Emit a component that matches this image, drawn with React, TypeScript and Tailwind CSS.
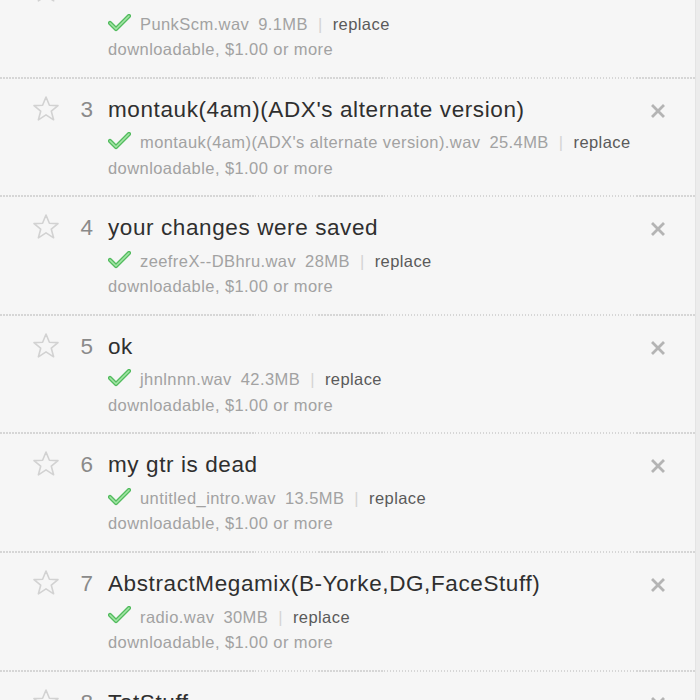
import React from "react";

type Row = { n: number; title: string; file: string; size: string };

const rows: Row[] = [
  { n: 2, title: "PunkScm", file: "PunkScm.wav", size: "9.1MB" },
  { n: 3, title: "montauk(4am)(ADX's alternate version)", file: "montauk(4am)(ADX's alternate version).wav", size: "25.4MB" },
  { n: 4, title: "your changes were saved", file: "zeefreX--DBhru.wav", size: "28MB" },
  { n: 5, title: "ok", file: "jhnlnnn.wav", size: "42.3MB" },
  { n: 6, title: "my gtr is dead", file: "untitled_intro.wav", size: "13.5MB" },
  { n: 7, title: "AbstractMegamix(B-Yorke,DG,FaceStuff)", file: "radio.wav", size: "30MB" },
  { n: 8, title: "TotStuff", file: "tot.wav", size: "12MB" },
];

function Star() {
  return (
    <svg width="28" height="28" viewBox="0 0 28 28">
      <polygon
        points="14,2 17.4,10.2 26,10.6 19.3,16.2 21.6,24.8 14,19.9 6.4,24.8 8.7,16.2 2,10.6 10.6,10.2"
        fill="none"
        stroke="#d2d2d2"
        strokeWidth="1.6"
        strokeLinejoin="round"
      />
    </svg>
  );
}

function Check() {
  return (
    <svg width="23" height="18" viewBox="0 0 23 18">
      <path d="M2 9 L8 15 L21 2" fill="none" stroke="#52bb5e" strokeWidth="4.2" strokeLinecap="round" strokeLinejoin="round" />
      <path d="M2 9 L8 15 L21 2" fill="none" stroke="#a4e6a6" strokeWidth="1.6" strokeLinecap="round" strokeLinejoin="round" />
    </svg>
  );
}

function XIcon() {
  return (
    <svg width="14" height="14" viewBox="0 0 14 14">
      <path d="M2 2 L12 12 M12 2 L2 12" stroke="#b4b4b4" strokeWidth="2.8" strokeLinecap="square" />
    </svg>
  );
}

function TrackRow({ r }: { r: Row }) {
  return (
    <div className="h-[118.6px] flex flex-col">
      <div className="flex-1 flex">
        <div className="w-[108px] shrink-0 flex items-start pt-[17px]">
          <div className="ml-[32px] mt-[-1px]">
            <Star />
          </div>
          <div className="w-[33px] text-right text-[22.5px] leading-[28px] text-[#8a8a8a]">{r.n}</div>
        </div>
        <div className="flex-1 pt-[17px]">
          <div className="text-[22.5px] leading-[28px] tracking-[0.6px] text-[#2f2f2f] whitespace-nowrap">{r.title}</div>
          <div className="flex items-center mt-[7px] h-[24px] text-[16.5px] tracking-[0.42px] whitespace-nowrap">
            <span className="mt-[-3px] mr-[9px]">
              <Check />
            </span>
            <span className="text-[#a2a2a2]">{r.file}</span>
            <span className="text-[#a2a2a2] ml-[9px]">{r.size}</span>
            <span className="text-[#d4d4d4] mx-[10px]">|</span>
            <span className="text-[#5a5a5a]">replace</span>
          </div>
          <div className="mt-[1px] h-[24px] leading-[24px] text-[16.5px] tracking-[0.42px] text-[#a2a2a2] whitespace-nowrap">
            downloadable, $1.00 or more
          </div>
        </div>
        <div className="w-[44px] shrink-0 pt-[25px]">
          <XIcon />
        </div>
      </div>
      <div className="h-[2px] bg-[repeating-linear-gradient(90deg,#d6d6d6_0px,#d6d6d6_1.5px,transparent_1.5px,transparent_3px)]" />
    </div>
  );
}

export default function App() {
  return (
    <div
      className="w-[700px] h-[700px] overflow-hidden bg-[#f6f6f6] flex"
      style={{ fontFamily: '"Liberation Sans", Arial, sans-serif' }}
    >
      <div className="w-[695px] overflow-hidden">
        <div className="mt-[-40px]">
          {rows.map((r) => (
            <TrackRow key={r.n} r={r} />
          ))}
        </div>
      </div>
      <div className="w-[5px] h-full bg-[#ececec] border-l border-[#e4e4e4]" />
    </div>
  );
}
